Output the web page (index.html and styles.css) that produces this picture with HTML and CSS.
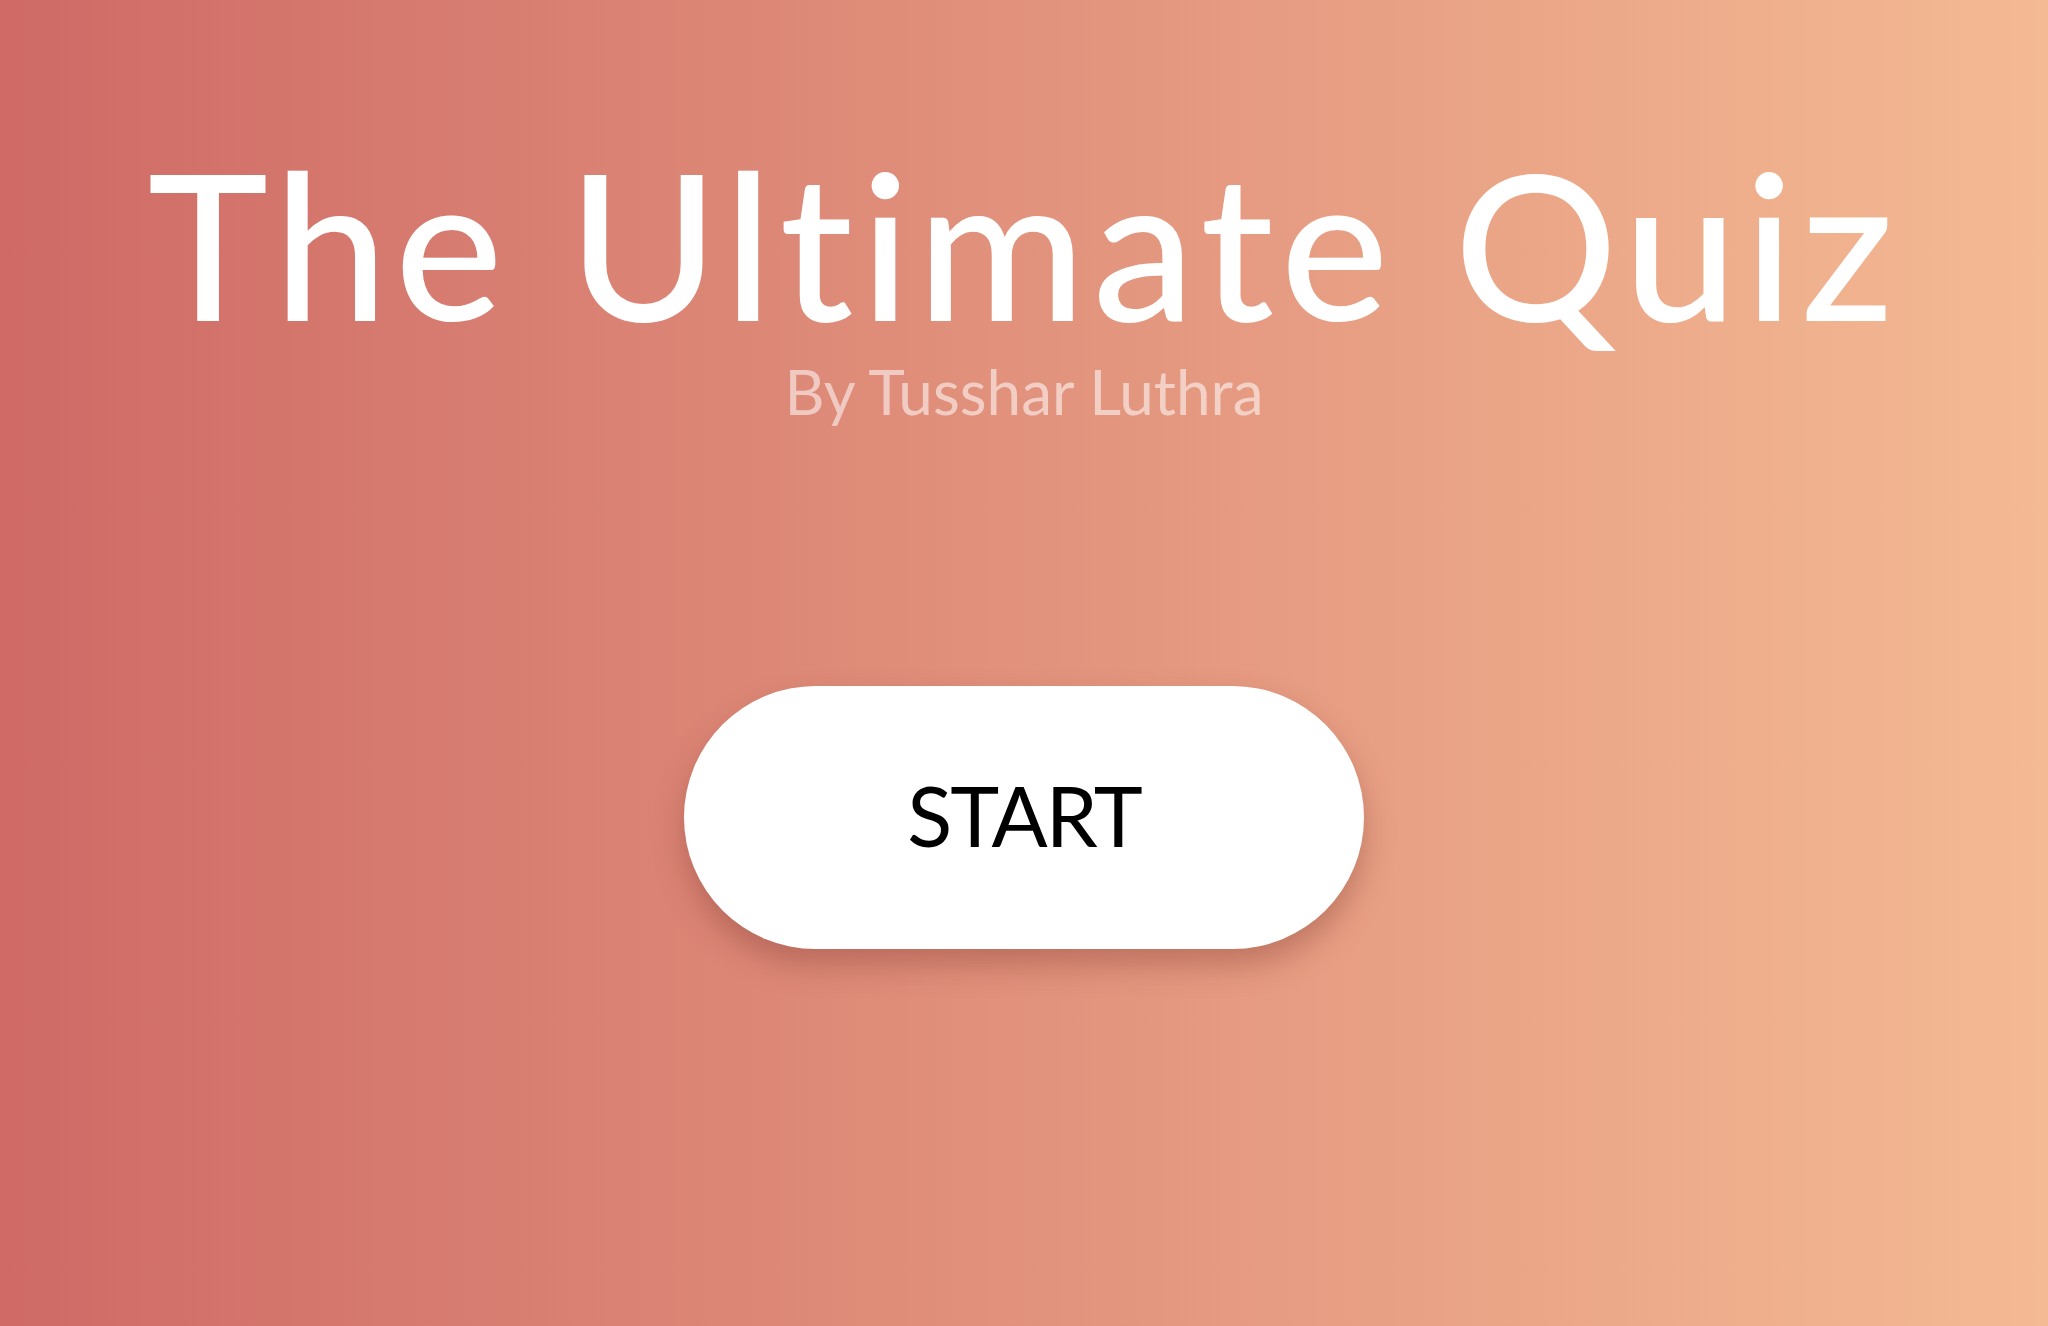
FILE: index.html
```html
<!DOCTYPE html>
<html>
<head>
<meta charset="utf-8">
<link rel="stylesheet" href="styles.css">
</head>
<body>
<main class="page">
  <h1 class="title">The Ultimate Quiz</h1>
  <p class="byline">By Tusshar Luthra</p>
  <button class="start">START</button>
</main>
</body>
</html>
```
FILE: styles.css
```css
html, body {
  margin: 0;
  padding: 0;
  height: 100%;
}
body {
  background: linear-gradient(to right, #cf6a66, #f4ba93);
  font-family: "Lato", "Open Sans", sans-serif;
}
.page {
  display: flex;
  flex-direction: column;
  align-items: center;
  padding-top: 140px;
}
.title {
  margin: 0;
  color: #fff;
  font-size: 204px;
  font-weight: 500;
  line-height: 1;
  letter-spacing: 7px;
}
.byline {
  margin: 16px 0 0;
  color: rgba(255, 255, 255, 0.55);
  font-size: 62px;
  line-height: 1;
}
.start {
  margin-top: 264px;
  width: 680px;
  height: 263px;
  padding: 0 0 6px;
  border: none;
  border-radius: 132px;
  background: #fff;
  color: #000;
  font-family: inherit;
  font-size: 83px;
  letter-spacing: -2px;
  box-shadow: 0 16px 30px rgba(120, 50, 40, 0.35);
  cursor: pointer;
}
```
